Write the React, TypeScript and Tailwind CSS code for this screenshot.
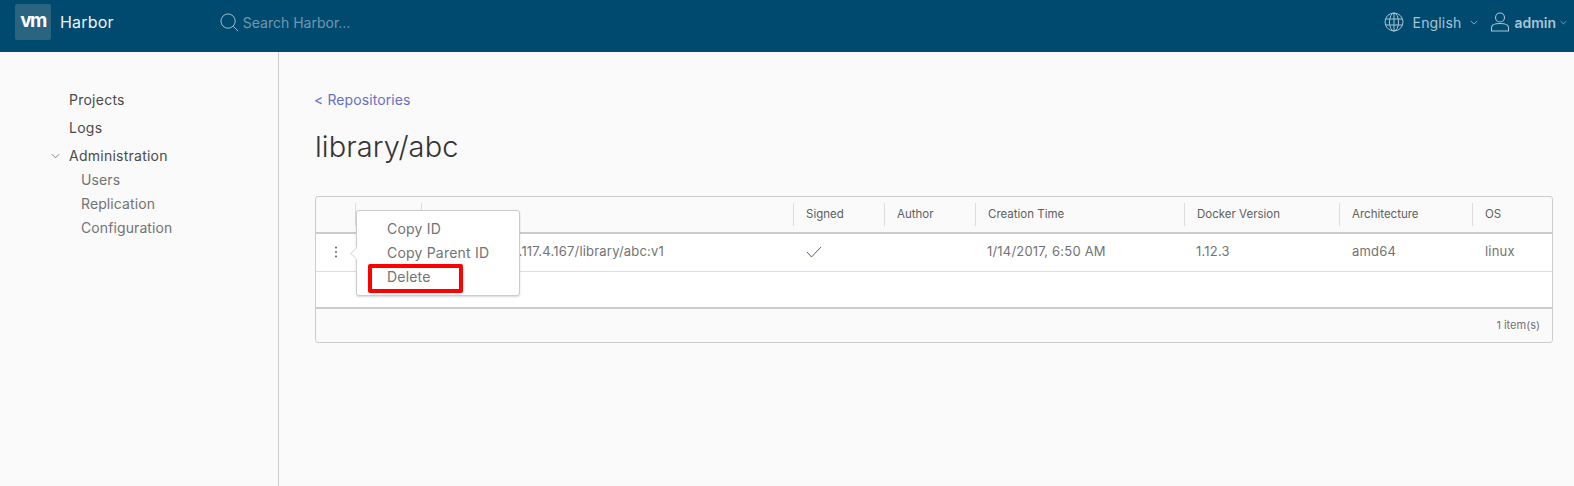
import React from 'react';

const columns = ['', '', '', 'Signed', 'Author', 'Creation Time', 'Docker Version', 'Architecture', 'OS'];

const gridCols = 'grid grid-cols-[39px_66px_372px_91px_91px_209px_155px_133px_1fr]';

const Chevron = ({ className }: { className: string }) => (
  <svg viewBox="0 0 10 6" fill="none" stroke="currentColor" strokeWidth="1" className={className}>
    <path d="M1 1l4 4 4-4" />
  </svg>
);

const Header = () => (
  <header className="h-[52px] bg-[#004a70] flex items-center shrink-0 text-[#a9c3d2]">
    <div className="w-9 h-9 ml-[15px] mb-[8px] rounded-[2px] bg-[#2a6481] flex items-center justify-center">
      <span className="text-white text-[19px] font-bold leading-none tracking-[-1.5px] mb-[4px]">vm</span>
    </div>
    <span className="ml-[9px] mb-[8px] text-[16px] tracking-[0.2px] text-[#f0f5f8]">Harbor</span>
    <svg viewBox="0 0 20 20" fill="none" stroke="currentColor" strokeWidth="1" className="w-[19px] h-[19px] ml-[106px] mb-[8px]">
      <circle cx="8.5" cy="8.5" r="7.5" />
      <path d="M14 14l5 5" />
    </svg>
    <span className="ml-[4px] mb-[8px] text-[14px] text-[#6f98ae]">Search Harbor...</span>
    <div className="ml-auto flex items-center mb-[8px]">
      <svg viewBox="0 0 20 20" fill="none" stroke="currentColor" strokeWidth="1" className="w-5 h-5">
        <circle cx="10" cy="10" r="9" />
        <ellipse cx="10" cy="10" rx="4.5" ry="9" />
        <path d="M10 1v18M1.5 7h17M1.5 13h17" />
      </svg>
      <span className="ml-[9px] text-[14px] tracking-[0.15px]">English</span>
      <Chevron className="w-[8px] h-[5px] ml-[9px]" />
      <svg viewBox="0 0 20 20" fill="none" stroke="currentColor" strokeWidth="1.1" className="w-5 h-5 ml-[12px]">
        <circle cx="10" cy="5.5" r="4.5" />
        <path d="M1.5 19v-3.5C1.5 13 5 11.5 10 11.5s8.5 1.5 8.5 4V19z" />
      </svg>
      <span className="ml-[4px] text-[14px] font-semibold">admin</span>
      <Chevron className="w-[7px] h-[5px] ml-[4px] mr-[7px]" />
    </div>
  </header>
);

const Sidebar = () => (
  <aside className="w-[279px] shrink-0 border-r border-[#cccccc] pt-[34px] pl-[69px] text-[14px] tracking-[0.25px]">
    <div className="leading-[28px] text-[#4a4a4a]">Projects</div>
    <div className="leading-[28px] text-[#4a4a4a]">Logs</div>
    <div className="relative leading-[28px] text-[#4a4a4a]">
      <Chevron className="absolute -left-[18px] top-[11px] w-[9px] h-[6px] text-[#777777]" />
      Administration
    </div>
    <div className="pl-[12px] -mt-[2px] text-[#737373] tracking-[0.1px]">
      <div className="leading-[24px]">Users</div>
      <div className="leading-[24px]">Replication</div>
      <div className="leading-[24px]">Configuration</div>
    </div>
  </aside>
);

const ActionMenu = () => (
  <div className="absolute left-[40px] top-[13px] w-[164px] h-[86px] bg-white border border-[#cccccc] rounded-[3px] shadow-[0_1px_2px_rgba(0,0,0,0.15)] pt-[6px] pl-[30px] text-[14px] tracking-[0.2px] text-[#737373] z-10">
    <div className="absolute -left-[5px] top-[38px] w-[9px] h-[9px] rotate-45 bg-white border-l border-b border-[#dddddd]" />
    <div className="leading-[24px]">Copy ID</div>
    <div className="leading-[24px]">Copy Parent ID</div>
    <div className="leading-[24px]">Delete</div>
    <div className="absolute left-[11px] top-[53px] w-[95px] h-[29px] border-[4px] border-[#ff0000] rounded-[2px]" />
  </div>
);

const Table = () => (
  <div className="relative mt-[29px] h-[147px] border border-[#cccccc] rounded-[3px] flex flex-col">
    <div className={`${gridCols} h-[35px] items-center text-[11.5px] text-[#5e5e5e]`}>
      {columns.map((name, i) => (
        <div key={i} className={`h-[23px] flex items-center pl-[12px] ${i > 0 ? 'border-l border-[#dddddd]' : ''}`}>
          {name}
        </div>
      ))}
    </div>
    <div className={`${gridCols} h-[40px] pb-[2px] bg-white border-t-2 border-b border-t-[#cccccc] border-b-[#dddddd] items-center text-[13px] tracking-[0.2px] text-[#737373]`}>
      <div className="flex justify-center pl-[1px]">
        <svg viewBox="0 0 4 12" className="w-[4px] h-[12px] fill-[#666666]">
          <circle cx="2" cy="1.5" r="1" />
          <circle cx="2" cy="6" r="1" />
          <circle cx="2" cy="10.5" r="1" />
        </svg>
      </div>
      <div />
      <div className="pl-[84px]">10.117.4.167/library/abc:v1</div>
      <div className="pl-[13px]">
        <svg viewBox="0 0 16 12" fill="none" stroke="#3f7a2e" strokeWidth="1" className="w-[16px] h-[12px]">
          <path d="M1 6l4.5 5L15 1" />
        </svg>
      </div>
      <div />
      <div className="pl-[12px]">1/14/2017, 6:50 AM</div>
      <div className="pl-[12px]">1.12.3</div>
      <div className="pl-[13px]">amd64</div>
      <div className="pl-[13px]">linux</div>
    </div>
    <div className="h-[37px] bg-white border-b-2 border-[#cccccc]" />
    <div className="flex-1 flex items-center justify-end pr-[12px] text-[11px] text-[#737373]">1 item(s)</div>
    <ActionMenu />
  </div>
);

export default function App() {
  return (
    <div className="w-[1574px] h-[486px] overflow-hidden flex flex-col bg-[#fafafa] font-['Inter',sans-serif]">
      <Header />
      <div className="flex flex-1">
        <Sidebar />
        <main className="flex-1 pl-[36px] pr-[21px] pt-[38px]">
          <div className="-ml-px text-[14px] leading-[20px] tracking-[0.1px] text-[#6870c4]">&lt; Repositories</div>
          <h1 className="mt-[17px] text-[29px] leading-[40px] font-light tracking-[0.1px] text-[#333333]">library/abc</h1>
          <Table />
        </main>
      </div>
    </div>
  );
}
